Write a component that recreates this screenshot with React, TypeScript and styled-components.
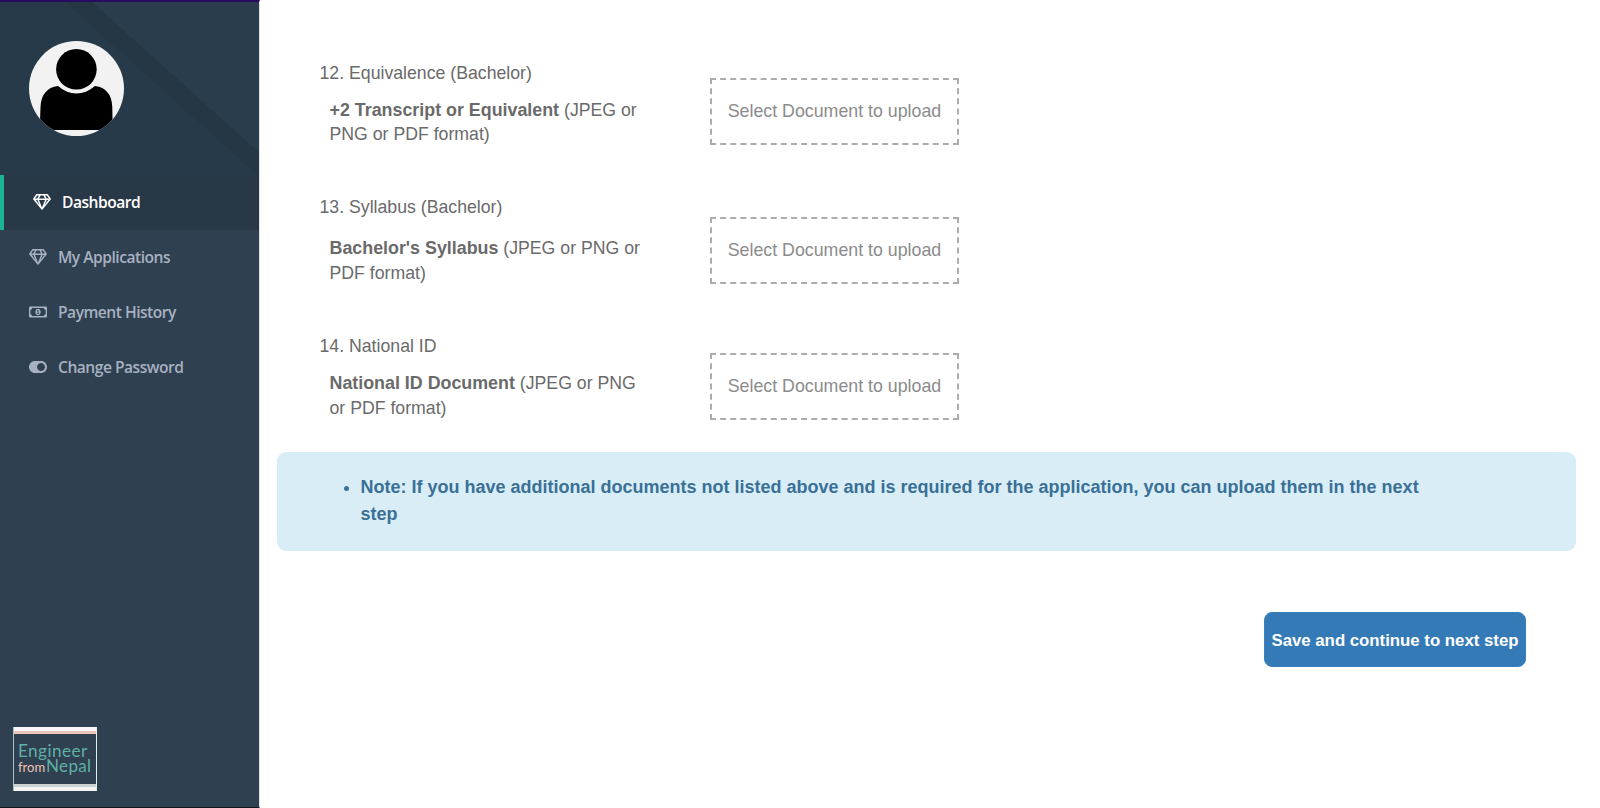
import { FC } from "react";
import styled, { createGlobalStyle } from "styled-components";
import { FaRegGem, FaRegMoneyBillAlt, FaToggleOn } from "react-icons/fa";

const GlobalStyle = createGlobalStyle`
  html, body {
    margin: 0;
    height: 100%;
    background: #fff;
    font-family: "Liberation Sans", Arial, sans-serif;
  }
`;

const Page = styled.div`
  display: flex;
  width: 1600px;
  height: 808px;
  overflow: hidden;
`;

const Sidebar = styled.aside`
  display: flex;
  flex-direction: column;
  flex: none;
  box-sizing: border-box;
  width: 260px;
  height: 808px;
  background: #2f4050;
  border-top: 2px solid #2a0a5e;
  border-right: 1px solid #dfe3e8;
  border-bottom: 1px solid #10161c;
  font-family: "Open Sans", sans-serif;
`;

const ProfileHeader = styled.div`
  box-sizing: border-box;
  height: 173px;
  padding: 39px 0 0 29px;
  background: linear-gradient(42deg, #273a49 0 57%, #253644 57% 63%, #2a3d4c 63%);
`;

const Avatar = styled.svg`
  display: block;
  width: 95px;
  height: 95px;
`;

const Nav = styled.nav`
  display: flex;
  flex-direction: column;
`;

const NavItem = styled.a<{ $active?: boolean }>`
  display: flex;
  align-items: center;
  box-sizing: border-box;
  height: ${(p) => (p.$active ? "54.5px" : "55px")};
  padding-left: 29px;
  border-left: ${(p) => (p.$active ? "4px solid #1ab394" : "0")};
  background: ${(p) => (p.$active ? "#293846" : "transparent")};
  color: ${(p) => (p.$active ? "#fff" : "#a7b1c2")};
  font-size: 15.6px;
  font-weight: 600;
  letter-spacing: -0.5px;
  text-decoration: none;

  svg {
    flex: none;
    width: 18px;
    height: 18px;
    margin-right: 11px;
  }
`;

const Thumb = styled.div`
  display: flex;
  flex-direction: column;
  box-sizing: border-box;
  width: 84px;
  height: 64px;
  margin: auto 0 16px 13px;
  background: #2f4050;
  border-left: 1px solid #a9c4c2;
  border-right: 1px solid #e8ecec;
  font-family: "Lato", sans-serif;
  line-height: 1;
  color: #5fb0a6;
`;

const ThumbTopBar = styled.div`
  flex: none;
  height: 7px;
  background: linear-gradient(#f6f6f6 0 4px, #ebc5ba 4px);
`;

const ThumbBody = styled.div`
  flex: 1;
  display: flex;
  flex-direction: column;
  padding: 8px 0 0 4px;
`;

const ThumbTitle = styled.span`
  font-size: 17.2px;
  letter-spacing: 0.4px;
`;

const ThumbLine = styled.span`
  display: flex;
  align-items: baseline;
  margin-top: -2px;
  font-size: 17px;
  letter-spacing: 0.3px;
`;

const ThumbFrom = styled.span`
  margin-right: 1px;
  color: #eec2b4;
  font-size: 13px;
  letter-spacing: 0;
`;

const ThumbBottomBar = styled.div`
  flex: none;
  height: 7px;
  background: linear-gradient(#c9d2d0 0 3px, #f4f4f4 3px);
`;

const Main = styled.main`
  flex: 1;
  box-sizing: border-box;
  padding: 61px 24.5px 0 16.5px;
`;

const DocList = styled.div`
  display: flex;
  flex-direction: column;
  gap: 48.5px;
  padding-left: 43px;
`;

const DocRow = styled.section`
  display: grid;
  grid-template-columns: 390.5px 249px;
  color: #6a6a6a;
  font-size: 17.7px;
  line-height: 24.5px;
`;

const DocLabel = styled.div<{ $gap: number }>`
  margin-bottom: ${(p) => p.$gap}px;
`;

const DocHint = styled.p`
  width: 315px;
  margin: 0 0 0 10px;

  b {
    font-size: 17.85px;
    font-weight: 700;
  }
`;

const UploadBox = styled.div<{ $top: number }>`
  display: flex;
  align-items: center;
  justify-content: center;
  box-sizing: border-box;
  height: 67px;
  margin-top: ${(p) => p.$top}px;
  border: 2px dashed #acacac;
  color: #8b8b8b;
  font-size: 17.8px;
  white-space: nowrap;
`;

const Note = styled.ul`
  box-sizing: border-box;
  height: 99px;
  margin: 32px 0 0;
  padding: 22px 150px 0 84px;
  background: #d9edf7;
  border-radius: 9px;
  color: #3a7096;
  font-size: 18px;
  font-weight: 700;
  line-height: 27px;
`;

const Actions = styled.div`
  display: flex;
  justify-content: flex-end;
  margin-top: 60.5px;
  padding-right: 49.5px;
`;

const SaveButton = styled.button`
  box-sizing: border-box;
  width: 262px;
  height: 55.5px;
  padding: 3px 0 0;
  background: #337ab7;
  border: 1px solid #3a80bd;
  border-radius: 8px;
  color: #fff;
  font-family: inherit;
  font-size: 16.8px;
  font-weight: 700;
  white-space: nowrap;
`;

const docs = [
  { label: "12. Equivalence (Bachelor)", title: "+2 Transcript or Equivalent", labelGap: 12, boxTop: 17 },
  { label: "13. Syllabus (Bachelor)", title: "Bachelor's Syllabus", labelGap: 16.5, boxTop: 22 },
  { label: "14. National ID", title: "National ID Document", labelGap: 13, boxTop: 19 },
];

const UserAvatar: FC = () => (
  <Avatar viewBox="0 0 95 95">
    <defs>
      <clipPath id="avatar-clip">
        <circle cx="47.5" cy="47.5" r="47.5" />
      </clipPath>
    </defs>
    <circle cx="47.5" cy="47.5" r="47.5" fill="#f2f2f2" />
    <g clipPath="url(#avatar-clip)">
      <circle cx="47.4" cy="28.3" r="20.3" />
      <path d="M10.7 89 L11.5 66 C12 54 18 46 29 45 C35 50 41 52.5 47.4 52.5 C54 52.5 60 50 66 45 C77 46 83 54 83.3 66 L83.7 89 Z" />
    </g>
  </Avatar>
);

const App: FC = () => (
  <>
    <GlobalStyle />
    <Page>
      <Sidebar>
        <ProfileHeader>
          <UserAvatar />
        </ProfileHeader>
        <Nav>
          <NavItem $active href="#">
            <FaRegGem />
            Dashboard
          </NavItem>
          <NavItem href="#">
            <FaRegGem />
            My Applications
          </NavItem>
          <NavItem href="#">
            <FaRegMoneyBillAlt />
            Payment History
          </NavItem>
          <NavItem href="#">
            <FaToggleOn />
            Change Password
          </NavItem>
        </Nav>
        <Thumb>
          <ThumbTopBar />
          <ThumbBody>
            <ThumbTitle>Engineer</ThumbTitle>
            <ThumbLine>
              <ThumbFrom>from</ThumbFrom>
              Nepal
            </ThumbLine>
          </ThumbBody>
          <ThumbBottomBar />
        </Thumb>
      </Sidebar>
      <Main>
        <DocList>
          {docs.map((doc) => (
            <DocRow key={doc.label}>
              <div>
                <DocLabel $gap={doc.labelGap}>{doc.label}</DocLabel>
                <DocHint>
                  <b>{doc.title}</b> (JPEG or PNG or PDF format)
                </DocHint>
              </div>
              <UploadBox $top={doc.boxTop}>Select Document to upload</UploadBox>
            </DocRow>
          ))}
        </DocList>
        <Note>
          <li>
            Note: If you have additional documents not listed above and is required for the application, you can upload them in the next step
          </li>
        </Note>
        <Actions>
          <SaveButton>Save and continue to next step</SaveButton>
        </Actions>
      </Main>
    </Page>
  </>
);

export default App;
